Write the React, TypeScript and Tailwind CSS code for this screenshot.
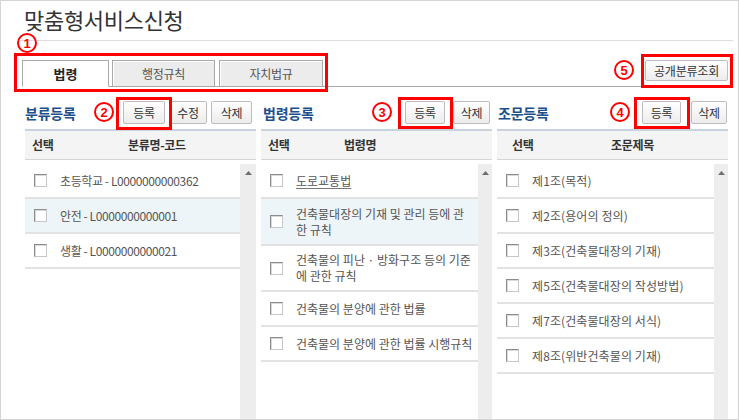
import { Fragment, type ReactNode } from 'react';

type Row = { lines: string[]; h: string; on?: boolean; link?: boolean };

interface PanelSpec {
  title: string;
  headW: string;
  buttons: { label: string; w: string; ml: string }[];
  selCell: string;
  nameLabel: string;
  scrollW: string;
  track: string;
  rows: Row[];
}

const panels: PanelSpec[] = [
  {
    title: '분류등록',
    headW: 'w-[98px]',
    buttons: [
      { label: '등록', w: 'w-[42px]', ml: 'ml-0' },
      { label: '수정', w: 'w-[38px]', ml: 'ml-[4px]' },
      { label: '삭제', w: 'w-[41px]', ml: 'ml-[4px]' },
    ],
    selCell: 'w-[103px] pl-[7px]',
    nameLabel: '분류명-코드',
    scrollW: 'w-[16px]',
    track: 'tracking-[-0.4px]',
    rows: [
      { lines: ['초등학교 - L0000000000362'], h: 'h-[35px]' },
      { lines: ['안전 - L0000000000001'], h: 'h-[35px]', on: true },
      { lines: ['생활 - L0000000000021'], h: 'h-[35px]' },
    ],
  },
  {
    title: '법령등록',
    headW: 'w-[144px] pl-[2px]',
    buttons: [
      { label: '등록', w: 'w-[40px]', ml: 'ml-0' },
      { label: '삭제', w: 'w-[37px]', ml: 'ml-[8px]' },
    ],
    selCell: 'w-[83px] pl-[7px]',
    nameLabel: '법령명',
    scrollW: 'w-[14px]',
    track: 'tracking-normal',
    rows: [
      { lines: ['도로교통법'], h: 'h-[35px]', link: true },
      { lines: ['건축물대장의 기재 및 관리 등에 관', '한 규칙'], h: 'h-[47px]', on: true },
      { lines: ['건축물의 피난 · 방화구조 등의 기준', '에 관한 규칙'], h: 'h-[46px]' },
      { lines: ['건축물의 분양에 관한 법률'], h: 'h-[35px]' },
      { lines: ['건축물의 분양에 관한 법률 시행규칙'], h: 'h-[35px]' },
    ],
  },
  {
    title: '조문등록',
    headW: 'w-[145px] pl-[1px]',
    buttons: [
      { label: '등록', w: 'w-[39px]', ml: 'ml-0' },
      { label: '삭제', w: 'w-[36px]', ml: 'ml-[10px]' },
    ],
    selCell: 'w-[114px] pl-[15px]',
    nameLabel: '조문제목',
    scrollW: 'w-[14px]',
    track: 'tracking-[0.1px]',
    rows: [
      { lines: ['제1조(목적)'], h: 'h-[35px]' },
      { lines: ['제2조(용어의 정의)'], h: 'h-[35px]' },
      { lines: ['제3조(건축물대장의 기재)'], h: 'h-[35px]' },
      { lines: ['제5조(건축물대장의 작성방법)'], h: 'h-[35px]' },
      { lines: ['제7조(건축물대장의 서식)'], h: 'h-[35px]' },
      { lines: ['제8조(위반건축물의 기재)'], h: 'h-[35px]' },
    ],
  },
];

function Btn({ children, className }: { children: ReactNode; className: string }) {
  return (
    <button
      className={`h-[23px] shrink-0 flex items-center justify-center rounded-[2px] border border-[#bdbdbd] bg-linear-to-b from-white to-[#ececec] text-[12px] leading-none tracking-[-0.2px] text-[#333] ${className}`}
    >
      {children}
    </button>
  );
}

function Check() {
  return (
    <span className="block w-[13px] h-[13px] shrink-0 border border-[#8c8c8c] border-r-[#c6c6c6] border-b-[#c6c6c6] bg-white shadow-[inset_1px_1px_0_#dadada]" />
  );
}

function Panel({ p }: { p: PanelSpec }) {
  return (
    <div className="w-[231px] flex flex-col min-h-0">
      {/* Heading + actions */}
      <div className="h-[23px] flex items-center">
        <h2 className={`${p.headW} shrink-0 text-[14px] leading-none font-bold tracking-[-0.2px] text-[#1d4f8c]`}>
          {p.title}
        </h2>
        {p.buttons.map((b) => (
          <Btn key={b.label} className={`${b.w} ${b.ml}`}>
            {b.label}
          </Btn>
        ))}
      </div>

      {/* Table */}
      <div className="mt-[5px] flex-1 flex flex-col min-h-0">
        <div className="h-[31px] flex items-center border-t-2 border-[#c9d3dd] border-b border-b-[#d6d6d6] bg-[#f4f4f4] text-[12px] font-bold tracking-[-0.3px] text-[#333]">
          <div className={p.selCell}>선택</div>
          <div>{p.nameLabel}</div>
        </div>
        <div className="flex-1 flex min-h-0">
          <div className="flex-1 pt-[4px]">
            {p.rows.map((r, i) => (
              <div
                key={i}
                className={`${r.h} flex items-center pl-[9px] border-b-2 border-[#e2e2e2] ${r.on ? 'bg-[#edf5f8]' : 'bg-white'}`}
              >
                <Check />
                <p
                  className={`ml-[13px] whitespace-nowrap text-[12px] leading-[16px] ${p.track} text-[#555] ${r.link ? 'underline underline-offset-2 decoration-[#777]' : ''}`}
                >
                  {r.lines.map((l, j) => (
                    <Fragment key={l}>
                      {j > 0 && <br />}
                      {l}
                    </Fragment>
                  ))}
                </p>
              </div>
            ))}
          </div>
          <div className={`${p.scrollW} mt-[4px] bg-[#ededed] flex justify-center pt-[7px]`}>
            <svg width="7" height="4" viewBox="0 0 7 4">
              <path d="M0 4 L3.5 0 L7 4Z" fill="#6f6f6f" />
            </svg>
          </div>
        </div>
      </div>
    </div>
  );
}

function Mark({ n, className }: { n: number; className: string }) {
  return (
    <span
      className={`absolute w-[20px] h-[20px] rounded-full border-2 border-[#ff0000] flex items-center justify-center text-[13px] leading-none font-bold text-[#ff0000] font-['Liberation_Sans',sans-serif] ${className}`}
    >
      {n}
    </span>
  );
}

export default function App() {
  return (
    <div className="relative w-[739px] h-[420px] overflow-hidden bg-white border border-[#d4d4d4] flex flex-col font-['Noto_Sans_CJK_KR',sans-serif]">
      {/* Title */}
      <h1 className="h-[39px] pl-[23px] pt-[4px] text-[22px] leading-[28px] font-normal tracking-[-0.3px] text-[#333]">
        맞춤형서비스신청
      </h1>
      <div className="ml-[19px] mr-[5px] border-t border-[#dedede]" />

      {/* Tabs */}
      <div className="ml-[21px] mr-[5px] mt-[19px] h-[27px] flex items-end border-b border-[#ababab]">
        <div className="w-[87px] h-[27px] -mb-px flex items-center justify-center border border-[#a9a9a9] border-b-white bg-white text-[13px] font-bold text-[#222]">
          법령
        </div>
        <div className="ml-[3px] w-[103px] h-[27px] -mb-px flex items-center justify-center border border-[#a9a9a9] bg-[#ececec] shadow-[inset_1px_1px_0_#fff] text-[12px] tracking-[-0.3px] text-[#555]">
          행정규칙
        </div>
        <div className="ml-[4px] w-[104px] h-[27px] -mb-px flex items-center justify-center border border-[#a9a9a9] bg-[#ececec] shadow-[inset_1px_1px_0_#fff] text-[12px] tracking-[-0.3px] text-[#555]">
          자치법규
        </div>
        <Btn className="ml-auto self-start mr-[5px] w-[83px] !h-[21px]">공개분류조회</Btn>
      </div>

      {/* Panels */}
      <div className="ml-[24px] mt-[14px] flex gap-[5px] flex-1 min-h-0">
        {panels.map((p) => (
          <Panel key={p.title} p={p} />
        ))}
      </div>

      {/* Annotations */}
      <div className="absolute left-[13px] top-[52px] w-[314px] h-[39px] border-[3px] border-[#ff0000]" />
      <div className="absolute left-[115px] top-[96px] w-[56px] h-[33px] border-[3px] border-[#ff0000]" />
      <div className="absolute left-[397px] top-[96px] w-[55px] h-[32px] border-[3px] border-[#ff0000]" />
      <div className="absolute left-[633px] top-[96px] w-[56px] h-[32px] border-[3px] border-[#ff0000]" />
      <div className="absolute left-[640px] top-[53px] w-[92px] h-[34px] border-[3px] border-[#ff0000]" />
      <Mark n={1} className="left-[16px] top-[32px]" />
      <Mark n={2} className="left-[93px] top-[101px]" />
      <Mark n={3} className="left-[371px] top-[101px]" />
      <Mark n={4} className="left-[609px] top-[101px]" />
      <Mark n={5} className="left-[613px] top-[59px]" />
    </div>
  );
}
